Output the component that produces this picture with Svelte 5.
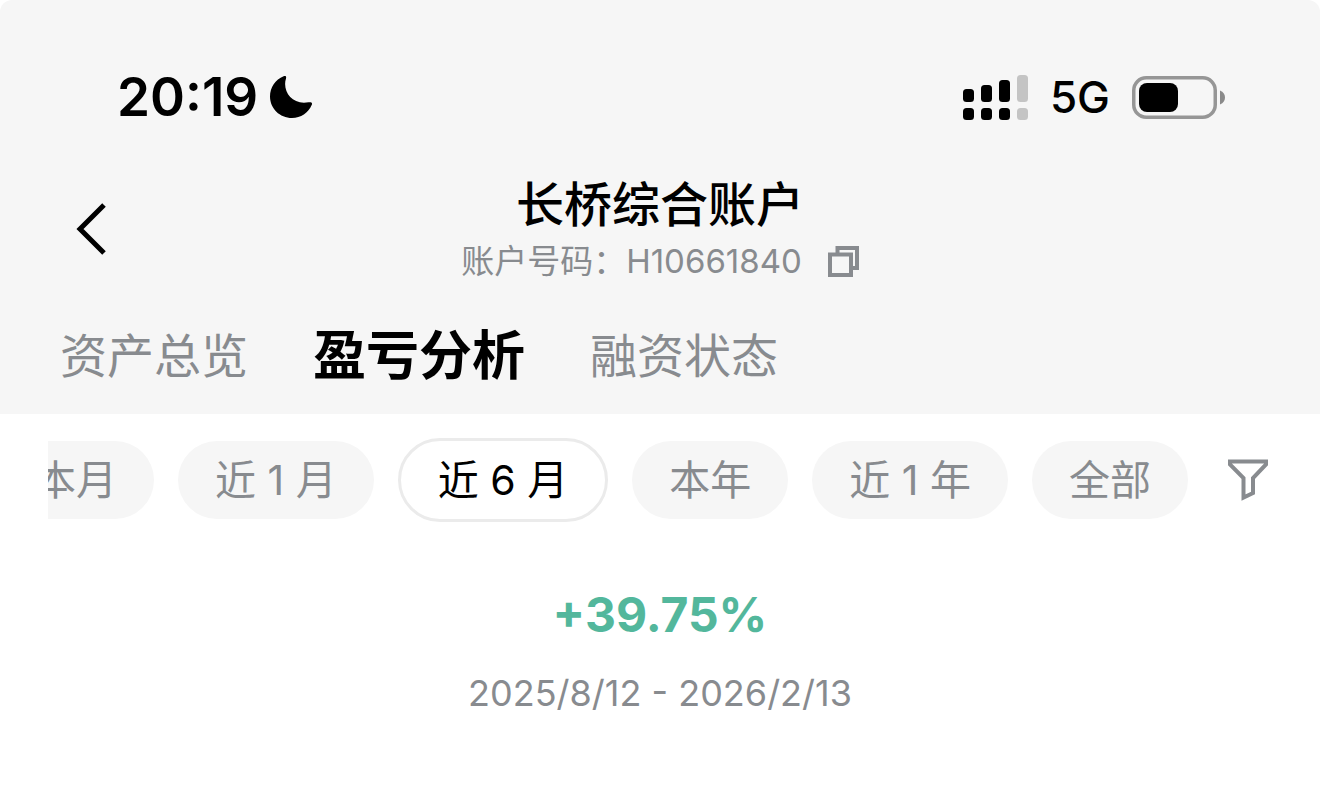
<script lang="ts">
	const tabs = ['资产总览', '盈亏分析', '融资状态'];
	const ranges = ['本月', '近 1 月', '近 6 月', '本年', '近 1 年', '全部'];

	let activeTab = $state('盈亏分析');
	let activeRange = $state('近 6 月');
</script>

<div class="screen">
	<header class="top">
		<div class="status">
			<div class="clock">
				<span class="time">20:19</span>
				<svg width="42" height="42" viewBox="0 0 42 42" aria-hidden="true">
					<path
						d="M13.6.3C15.4-.5 16.600.4 16 2.400C12 15 22 29.500 38.500 26.300C41.500 25.700 42.500 26.900 41.800 28.700C38.300 36.800 30.800 42 22 42C9.800 42 0 32.500 0 20.500C0 11.500 5.300 3.800 13.600.3Z"
					/>
				</svg>
			</div>
			<div class="signals">
				<svg width="65" height="45" viewBox="0 0 65 45" aria-hidden="true">
					<rect x="0" y="14" width="11" height="13" rx="3.500" />
					<rect x="18" y="10" width="11" height="17" rx="3.500" />
					<rect x="36" y="5" width="11" height="22" rx="3.500" />
					<rect x="54" y="0" width="11" height="27" rx="3.500" fill="#c4c4c4" />
					<rect x="0" y="33" width="11" height="12" rx="3.500" />
					<rect x="18" y="33" width="11" height="12" rx="3.500" />
					<rect x="36" y="33" width="11" height="12" rx="3.500" />
					<rect x="54" y="33" width="11" height="12" rx="3.500" fill="#c4c4c4" />
				</svg>
				<span class="network">5G</span>
				<svg width="93" height="43" viewBox="0 0 93 43" aria-hidden="true">
					<rect x="1.750" y="1.750" width="81.500" height="39.500" rx="12.500" fill="none" stroke="#969696" stroke-width="3.500" />
					<rect x="7" y="7" width="39" height="29" rx="8" />
					<path d="M88 14.500C91.500 16 93 18.500 93 21.500S91.500 27 88 28.500Z" fill="#8a8a8a" />
				</svg>
			</div>
		</div>

		<div class="nav">
			<button class="back" aria-label="返回">
				<svg width="30" height="52" viewBox="0 0 30 52" fill="none" stroke="#000" stroke-width="5" aria-hidden="true">
					<path d="M28 2L4 26L28 50" />
				</svg>
			</button>
			<div class="account">
				<h1>长桥综合账户</h1>
				<div class="number">
					<span>账户号码：H10661840</span>
					<button class="copy" aria-label="复制">
						<svg width="31" height="31" viewBox="0 0 31 31" fill="none" stroke="#888b8f" stroke-width="4" aria-hidden="true">
							<path d="M2 8.500H23V29H2Z" />
							<path d="M9.500 8.500V2H29V22H23" />
						</svg>
					</button>
				</div>
			</div>
		</div>

		<nav class="tabs">
			{#each tabs as tab (tab)}
				<button class:active={tab === activeTab} onclick={() => (activeTab = tab)}>{tab}</button>
			{/each}
		</nav>
	</header>

	<main>
		<div class="filters">
			<div class="ranges">
				{#each ranges as range (range)}
					<button class="chip" class:active={range === activeRange} onclick={() => (activeRange = range)}>
						{range}
					</button>
				{/each}
			</div>
			<button class="funnel" aria-label="筛选">
				<svg width="40" height="42" viewBox="0 0 40 42" fill="none" stroke="#888b8f" stroke-width="4" aria-hidden="true">
					<path d="M2 2.500H38V5.500L25 19V34L15.500 38.500V19L2 5.500Z" />
				</svg>
			</button>
		</div>

		<section class="summary">
			<p class="rate">+39.75%</p>
			<p class="period">2025/8/12 - 2026/2/13</p>
		</section>
	</main>
</div>

<style>
	:global(body) {
		margin: 0;
		background: #fff;
	}
	.screen {
		font-family: Inter, 'Noto Sans CJK SC', sans-serif;
		color: #000;
	}
	button {
		padding: 0;
		border: 0;
		background: none;
		font: inherit;
		color: inherit;
		cursor: pointer;
	}
	svg {
		display: block;
	}
	.top {
		padding: 64px 60px 18px;
		border-radius: 12px 12px 0 0;
		background: #f6f6f6;
	}
	.status {
		display: flex;
		justify-content: space-between;
		align-items: center;
		height: 66px;
		padding: 0 35px 0 57px;
	}
	.clock,
	.signals {
		display: flex;
		align-items: center;
	}
	.clock {
		gap: 12px;
	}
	.signals {
		gap: 22px;
	}
	.time {
		font-size: 53px;
		font-weight: 600;
	}
	.network {
		font-size: 44px;
		font-weight: 500;
	}
	.nav {
		display: grid;
		grid-template-columns: 48px 1fr 48px;
		align-items: center;
		margin-top: 43px;
	}
	.back {
		padding-left: 16px;
	}
	.account {
		text-align: center;
	}
	h1 {
		margin: 0;
		font-size: 48px;
		font-weight: 500;
		line-height: 64px;
	}
	.number {
		display: flex;
		justify-content: center;
		align-items: center;
		gap: 26px;
		font-size: 33px;
		line-height: 48px;
		color: #888b8f;
	}
	.tabs {
		display: flex;
		gap: 65px;
		margin-top: 31px;
	}
	.tabs button {
		font-size: 47px;
		line-height: 80px;
		color: #888b8f;
	}
	.tabs button.active {
		font-size: 53px;
		font-weight: 700;
		color: #000;
	}
	.filters {
		display: flex;
		align-items: center;
		gap: 40px;
		padding: 24px 52px 0 48px;
	}
	.ranges {
		display: flex;
		flex: 1;
		justify-content: flex-end;
		align-items: center;
		gap: 24px;
		min-width: 0;
		overflow: hidden;
	}
	.chip {
		flex: none;
		padding: 0 37px;
		border-radius: 42px;
		background: #f6f6f6;
		font-size: 41px;
		line-height: 78px;
		color: #888b8f;
	}
	.chip.active {
		border: 3px solid #ebebeb;
		background: #fff;
		color: #000;
	}
	.summary {
		padding: 63px 0;
		text-align: center;
	}
	.summary p {
		margin: 0;
	}
	.rate {
		font-size: 48px;
		font-weight: 700;
		line-height: 60px;
		color: #53b79c;
	}
	.summary .period {
		margin-top: 24px;
		font-size: 36px;
		line-height: 48px;
		color: #888b8f;
	}
</style>
